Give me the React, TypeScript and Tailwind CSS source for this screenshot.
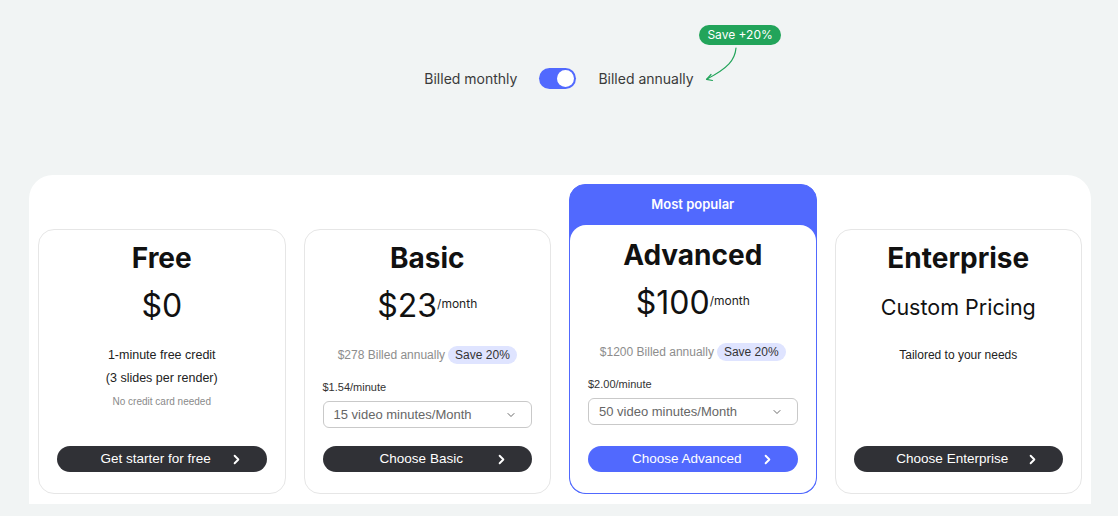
import { ChevronRight, ChevronDown } from 'lucide-react'

type Plan = {
  name: string
  price: string
  perMonth?: boolean
  annual?: string
  perMinute?: string
  minutes?: string
  lines?: string[]
  note?: string
  custom?: string
  tagline?: string
  cta: string
  popular?: boolean
}

const PLANS: Plan[] = [
  {
    name: 'Free',
    price: '$0',
    lines: ['1-minute free credit', '(3 slides per render)'],
    note: 'No credit card needed',
    cta: 'Get starter for free',
  },
  {
    name: 'Basic',
    price: '$23',
    perMonth: true,
    annual: '$278 Billed annually',
    perMinute: '$1.54/minute',
    minutes: '15 video minutes/Month',
    cta: 'Choose Basic',
  },
  {
    name: 'Advanced',
    price: '$100',
    perMonth: true,
    annual: '$1200 Billed annually',
    perMinute: '$2.00/minute',
    minutes: '50 video minutes/Month',
    cta: 'Choose Advanced',
    popular: true,
  },
  {
    name: 'Enterprise',
    price: '',
    custom: 'Custom Pricing',
    tagline: 'Tailored to your needs',
    cta: 'Choose Enterprise',
  },
]

export default function App() {
  return (
    <div className="min-h-[516px] w-[1118px] bg-[#f1f4f4] font-['Inter',sans-serif] text-[#111]">
      <BillingToggle />

      <div className="ml-[29px] mt-[86px] w-[1062px] rounded-t-3xl bg-white px-[9px] pt-[9px] pb-[10px]">
        <div className="grid grid-cols-4 items-end gap-[18px]">
          {PLANS.map((p) => (
            <PlanCard key={p.name} plan={p} />
          ))}
        </div>
      </div>
    </div>
  )
}

function BillingToggle() {
  return (
    <div className="flex items-center justify-center pt-[68px] text-[14px] text-[#3a3a3a]">
      <span className="leading-[21px]">Billed monthly</span>
      <div className="mx-[22px] flex h-[21px] w-[37px] items-center justify-end rounded-full bg-[#5169fe] px-[2px]">
        <div className="h-[17px] w-[17px] rounded-full bg-white" />
      </div>
      <div className="relative">
        <span className="leading-[21px]">Billed annually</span>
        {/* save badge + curved arrow */}
        <div className="absolute left-[101px] top-[-43px] rounded-full bg-[#22a45a] px-[8px] py-[2px] text-[12px] leading-[16px] whitespace-nowrap text-white">
          Save +20%
        </div>
        <svg className="absolute left-[104px] top-[-22px]" width="40" height="40" viewBox="0 0 40 40" fill="none">
          <path d="M34 2 C33 14 26 22 5 33" stroke="#22a45a" strokeWidth="1.2" strokeLinecap="round" />
          <path d="M9 28.5 L4.5 33.3 L10.5 34.5" stroke="#22a45a" strokeWidth="1.2" strokeLinecap="round" strokeLinejoin="round" />
        </svg>
      </div>
    </div>
  )
}

function PlanCard({ plan }: { plan: Plan }) {
  if (plan.popular) {
    return (
      <div className="flex flex-col rounded-2xl border border-[#5169fe] bg-[#5169fe]">
        <div className="flex h-[40px] items-center justify-center pb-[1px] text-[13px] font-semibold text-white">
          Most popular
        </div>
        <div className="h-[268px] rounded-2xl bg-white">
          <CardBody plan={plan} />
        </div>
      </div>
    )
  }
  return (
    <div className="h-[265px] rounded-2xl border border-[#e6e6e6] bg-white">
      <CardBody plan={plan} />
    </div>
  )
}

function CardBody({ plan }: { plan: Plan }) {
  return (
    <div className={`flex h-full flex-col px-[18px] pb-[21px] ${plan.popular ? 'pt-[14px]' : 'pt-[12px]'}`}>
      <h2 className="text-center text-[28px] leading-[32px] font-bold">{plan.name}</h2>

      {plan.custom ? (
        <div className="mt-[15px] text-center text-[21.5px] leading-[36px]">{plan.custom}</div>
      ) : (
        <div className="mt-[14px] flex items-center justify-center">
          <span className="text-[32px] leading-[36px]">{plan.price}</span>
          {plan.perMonth && <span className="pb-[4px] text-[12px] leading-[16px] text-[#222]">/month</span>}
        </div>
      )}

      <div className="font-['Liberation_Sans',Arial,sans-serif]">
        {plan.lines && (
          <div className="mt-[20px] text-center text-[12.5px] text-[#222]">
            {plan.lines.map((l) => (
              <div key={l} className="leading-[23px]">{l}</div>
            ))}
            <div className="mt-[4px] text-[10px] leading-[16px] text-[#8a8a8a]">{plan.note}</div>
          </div>
        )}

        {plan.tagline && (
          <div className="mt-[21px] text-center text-[12px] leading-[18px] text-[#222]">{plan.tagline}</div>
        )}

        {plan.annual && (
          <>
            <div className="mt-[22px] flex items-center justify-center gap-[3px] text-[12px] leading-[18px]">
              <span className="text-[#8d8d8d]">{plan.annual}</span>
              <span className="rounded-full bg-[#dfe4ff] px-[7px] text-[#333]">Save 20%</span>
            </div>
            <div className="mt-[15px] text-[11px] leading-[16px] text-[#333]">{plan.perMinute}</div>
            <div className="mt-[6px] flex h-[27px] items-center justify-between rounded-md border border-[#c9c9c9] pl-[10px] pr-[14px] text-[13px] text-[#666]">
              <span>{plan.minutes}</span>
              <ChevronDown size={12} strokeWidth={1.6} className="text-[#444]" />
            </div>
          </>
        )}
      </div>

      <button
        className={`relative mt-auto flex h-[26px] w-full items-center justify-center rounded-full font-['Liberation_Sans',Arial,sans-serif] text-[13.5px] text-white ${
          plan.popular ? 'bg-[#5169fe]' : 'bg-[#303136]'
        }`}
      >
        <span className="mr-[12px]">{plan.cta}</span>
        <ChevronRight size={15} strokeWidth={3} className="absolute right-[23px]" />
      </button>
    </div>
  )
}
